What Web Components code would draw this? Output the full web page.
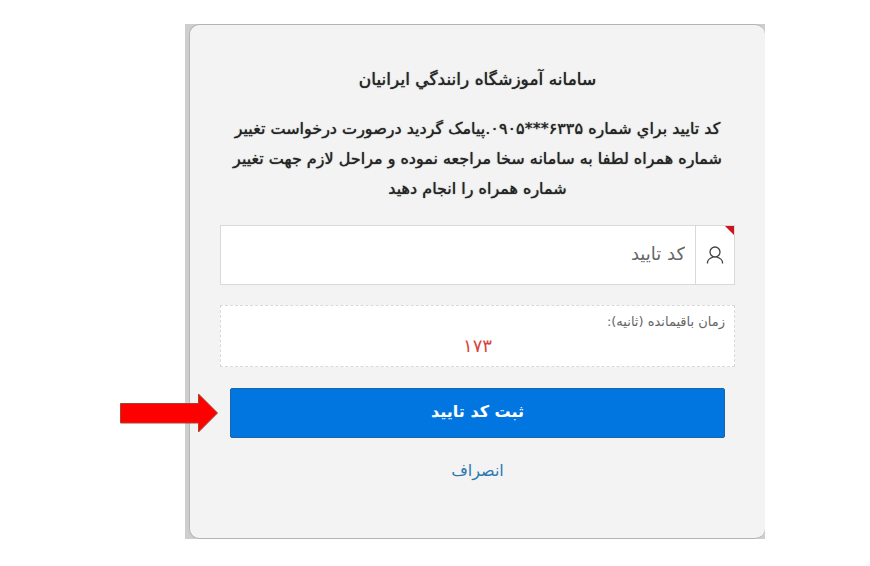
<!DOCTYPE html>
<html lang="fa" dir="rtl">
<head>
<meta charset="utf-8">
<meta name="viewport" content="width=device-width, initial-scale=1">
<title>سامانه آموزشگاه رانندگي ايرانيان</title>
<style>
    body {
        margin: 0;
        background: #fff;
        color: #252525;
        font-family: "DejaVu Sans", "Noto Sans", sans-serif;
    }
</style>
</head>
<body>
<verify-page>
    <verify-card>
        <h1 slot="title">سامانه آموزشگاه رانندگي ايرانيان</h1>
        <p slot="message">کد تاييد براي شماره <bdi dir="ltr">۰۹۰۵***۶۳۳۵</bdi>.پيامک گرديد درصورت درخواست تغيير<br>شماره همراه لطفا به سامانه سخا مراجعه نموده و مراحل لازم جهت تغيير<br>شماره همراه را انجام دهيد</p>
        <code-field label="کد تاييد"></code-field>
        <time-left seconds="173">زمان باقيمانده (ثانيه):</time-left>
        <submit-row>ثبت کد تاييد</submit-row>
        <cancel-link href="#">انصراف</cancel-link>
    </verify-card>
</verify-page>

<script>
class VerifyPage extends HTMLElement {
    constructor() {
        super();
        this.attachShadow({ mode: 'open' }).innerHTML = `
            <style>
                :host {
                    display: block;
                    padding: 24px 105px 27px 185px;
                }
                main {
                    background: #cecece;
                    padding-left: 4px;
                }
            </style>
            <main><slot></slot></main>
        `;
    }
}
customElements.define('verify-page', VerifyPage);

class VerifyCard extends HTMLElement {
    constructor() {
        super();
        this.attachShadow({ mode: 'open' }).innerHTML = `
            <style>
                :host {
                    display: flex;
                    flex-direction: column;
                    box-sizing: border-box;
                    padding: 39px 30px 54px;
                    background: #f3f3f3;
                    border: 1px solid #b4b4b4;
                    border-right: 0;
                    border-radius: 10px;
                    text-align: center;
                }
                /* Regular weight with a tight shadow gives a medium weight */
                ::slotted(h1),
                ::slotted(p) {
                    font-weight: normal;
                    line-height: 30px;
                    text-shadow: 0 0 1px currentColor;
                }
                ::slotted(h1) {
                    margin: 0 0 20px;
                    font-size: 17px;
                }
                ::slotted(p) {
                    margin: 0 -10px 21px;
                    font-size: 16px;
                }
            </style>
            <slot name="title"></slot>
            <slot name="message"></slot>
            <slot></slot>
        `;
    }
}
customElements.define('verify-card', VerifyCard);

class CodeField extends HTMLElement {
    connectedCallback() {
        const label = this.getAttribute('label');
        this.attachShadow({ mode: 'open' }).innerHTML = `
            <style>
                :host {
                    display: block;
                    margin-bottom: 20px;
                }
                .field {
                    position: relative;
                    display: flex;
                    height: 58px;
                    background: #fff;
                    border: 1px solid #d9d9d9;
                }
                /* Required marker in the corner */
                .field::before {
                    content: "";
                    position: absolute;
                    top: 0;
                    right: 0;
                    border-top: 9px solid #d0111b;
                    border-left: 9px solid transparent;
                }
                label {
                    display: flex;
                    align-items: center;
                    justify-content: center;
                    width: 38px;
                    border-left: 1px solid #d9d9d9;
                }
                input {
                    flex: 1;
                    min-width: 0;
                    padding: 0 10px 4px;
                    border: 0;
                    background: none;
                    color: #404040;
                    font: inherit;
                    font-size: 18px;
                }
                input::placeholder { color: #666; opacity: 1; }
            </style>
            <div class="field">
                <label for="code">
                    <svg width="18" height="20" viewBox="0 0 18 20" fill="none" stroke="#404040" stroke-width="1.3" aria-hidden="true">
                        <circle cx="9" cy="7" r="5"/>
                        <path d="M1.500 18.500v-1c0-2.500 2.500-4.500 6-5.500M16.500 18.500v-1c0-2.500-2.500-4.500-6-5.500"/>
                    </svg>
                </label>
                <input id="code" type="text" inputmode="numeric" placeholder="${label}" aria-label="${label}">
            </div>
        `;
    }
}
customElements.define('code-field', CodeField);

class TimeLeft extends HTMLElement {
    connectedCallback() {
        const seconds = Number(this.getAttribute('seconds')).toLocaleString('fa-IR');
        this.attachShadow({ mode: 'open' }).innerHTML = `
            <style>
                :host {
                    display: block;
                    margin-bottom: 21px;
                    padding: 4px 9px 8px;
                    background: #fff;
                    border: 1px dashed #d9d9d9;
                }
                .caption {
                    color: #666;
                    font-size: 13px;
                    line-height: 24px;
                    text-align: start;
                }
                .seconds {
                    display: block;
                    color: #d64541;
                    font-size: 18px;
                    line-height: 24px;
                }
            </style>
            <div class="caption" id="caption"><slot></slot></div>
            <output class="seconds" aria-labelledby="caption">${seconds}</output>
        `;
    }
}
customElements.define('time-left', TimeLeft);

class SubmitRow extends HTMLElement {
    constructor() {
        super();
        this.attachShadow({ mode: 'open' }).innerHTML = `
            <style>
                :host {
                    position: relative;
                    display: flex;
                    padding: 0 10px;
                    margin-bottom: 20px;
                }
                button {
                    flex: 1;
                    height: 50px;
                    padding: 0 0 4px;
                    background: #0276e0;
                    border: 1px solid #1c65a8;
                    border-radius: 2px;
                    color: #fff;
                    font: inherit;
                    font-size: 16px;
                    font-weight: bold;
                    cursor: pointer;
                }
                /* Pointer lying over the card's left edge */
                .arrow {
                    position: absolute;
                    top: 4px;
                    right: 100%;
                }
            </style>
            <button type="button"><slot></slot></button>
            <svg class="arrow" width="101" height="42" viewBox="0 0 101 42" aria-hidden="true">
                <path d="M1.500 11.500H79.500V2L98.500 21L79.500 40V31H1.500Z" fill="#fe0000" stroke="#a8442c"/>
            </svg>
        `;
    }
}
customElements.define('submit-row', SubmitRow);

class CancelLink extends HTMLElement {
    connectedCallback() {
        this.attachShadow({ mode: 'open' }).innerHTML = `
            <style>
                :host {
                    display: block;
                    line-height: 26px;
                }
                a {
                    color: #2b78b0;
                    font-size: 16px;
                    text-decoration: none;
                }
            </style>
            <a href="${this.getAttribute('href')}"><slot></slot></a>
        `;
    }
}
customElements.define('cancel-link', CancelLink);
</script>
</body>
</html>
